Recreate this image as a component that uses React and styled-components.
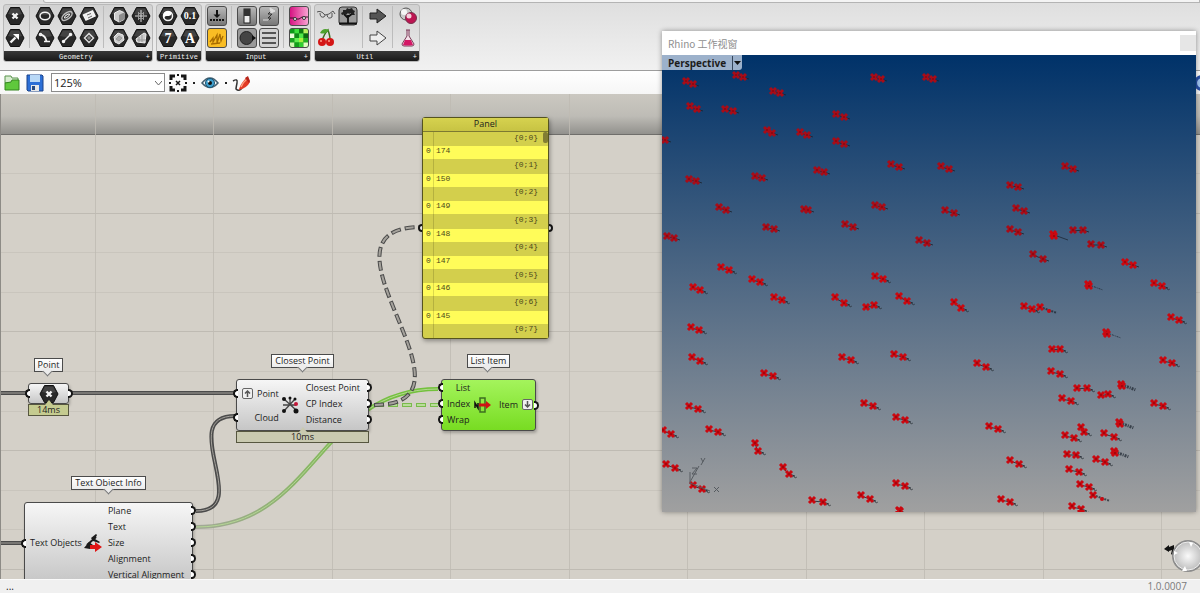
import React from "react";
import styled, { createGlobalStyle } from "styled-components";

const GlobalStyle = createGlobalStyle`
  *,
  *::before,
  *::after {
    box-sizing: border-box;
  }

  body {
    margin: 0;
    overflow: hidden;
    font-family: "Open Sans", "Noto Sans CJK SC", sans-serif;
    color: #1c1c1c;
  }

  button {
    padding: 0;
    border: 0;
    background: none;
    font: inherit;
    color: inherit;
  }

  svg {
    display: block;
  }
`

const Page = styled.div`
  position: relative;
  display: flex;
  flex-direction: column;
  height: 100vh;
  background: #efefef;
`

/* ribbon */

const Ribbon = styled.header`
  display: flex;
  flex-direction: column;
  height: 71px;
  flex-shrink: 0;
  background: linear-gradient(#dedede, #f1f1f1);
  border-bottom: 1px solid #9d9d9d;
`

const TabEdge = styled.div`
  height: 3px;
  margin-left: 43px;
  border: 1px solid #b4b4b4;
  border-top: 0;
  border-radius: 0 0 0 4px;
  background: #f4f4f4;
`

const Groups = styled.div`
  display: flex;
  gap: 3px;
  padding: 1px 3px;
`

const Group = styled.section`
  display: flex;
  flex-direction: column;
  border: 1px solid #b9b9b9;
  border-radius: 3px;
  background: linear-gradient(#d2d2d2, #ececec);
  overflow: hidden;
`

const GroupBody = styled.div`
  display: flex;
  padding: 1px;
`

const Section = styled.div`
  display: grid;
  grid-template-rows: 20px 20px;
  grid-auto-flow: column;
  grid-auto-columns: 20px;
  gap: 2px;

  & + & {
    margin-left: 4px;
    padding-left: 5px;
    border-left: 1px solid #bcbcbc;
  }
`

const GroupTitle = styled.h2`
  display: flex;
  align-items: center;
  height: 11px;
  margin: 2px -1px -1px;
  padding: 0 3px;
  background: linear-gradient(#383838, #161616);
  color: #f2f2f2;
  font: 7px/10px "Liberation Mono", monospace;

  span:first-child {
    flex: 1;
    text-align: center;
  }
`

const IconButton = styled.button`
  width: 20px;
  height: 20px;
`

const Tile = styled.button`
  width: 20px;
  height: 20px;
  border: 1px solid #4c4c4c;
  border-radius: 3px;
  background: ${props => props.$bg || "linear-gradient(#b8b8b8, #777)"};
  overflow: hidden;
`

/* toolbar */

const Toolbar = styled.nav`
  display: flex;
  align-items: center;
  flex-shrink: 0;
  height: 23px;
  padding: 0 0 0 2px;
  background: linear-gradient(#fff, #f6f6f6);
  overflow: hidden;
`

const ToolButton = styled.button`
  flex-shrink: 0;
  width: 20px;
  height: 20px;
  margin-right: ${props => props.$gap || 0}px;
`

const ZoomBox = styled.div`
  position: relative;
  width: 114px;
  height: 19px;
  margin-right: 3px;

  svg {
    position: absolute;
    top: 8px;
    right: 3px;
    pointer-events: none;
  }
`

const ZoomSelect = styled.select`
  display: block;
  appearance: none;
  width: 100%;
  height: 100%;
  padding: 0 2px;
  border: 1px solid #8b8b8b;
  border-radius: 0;
  background: #fff;
  color: #222;
  font: 11px/16px "Open Sans", sans-serif;
`

const Caret = styled.span`
  width: 2px;
  height: 2px;
  margin: 0 5px;
  background: #222;
`

const HelpButton = styled(ToolButton)`
  width: 16px;
  height: 16px;
  margin-left: auto;
  margin-right: -10px;
  border: 3px solid #2850a8;
  border-radius: 50%;
  background: #9ec4f0;
`

/* canvas */

const Canvas = styled.main`
  position: relative;
  flex: 1;
  min-height: 0;
  overflow: hidden;
  border-left: 1px solid #8d8b86;
  background: #d4d0c8;
`

const CanvasShade = styled.div`
  height: 41px;
  background: linear-gradient(#cbc8c1 0%, #bebcb6 55%, #92918d 100%);
  border-bottom: 1px solid #6f6e6b;
`

const Wires = styled.svg`
  position: absolute;
  inset: 0 auto auto -1px;
  width: calc(100% + 1px);
  height: 100%;
`

const Placed = styled.div`
  position: absolute;
  left: ${props => props.$x}px;
  top: ${props => props.$y}px;
  width: ${props => props.$w}px;
  display: flex;
  flex-direction: column;
  align-items: center;
`

const Tag = styled.div`
  position: relative;
  height: 14px;
  margin-bottom: ${props => props.$gap || 11}px;
  padding: 0 3px;
  border: 1px solid #4b4b4b;
  background: linear-gradient(#fff, #ececec);
  font-size: 9px;
  line-height: 12px;
  white-space: nowrap;

  &::after {
    content: "";
    position: absolute;
    left: calc(50% - 4px);
    bottom: -4px;
    width: 7px;
    height: 7px;
    border: solid #777;
    border-width: 0 1px 1px 0;
    background: #ececec;
    transform: rotate(45deg);
  }
`

const Body = styled.div`
  position: relative;
  display: flex;
  width: 100%;
  height: ${props => props.$h}px;
  border: 1px solid #4a4a4a;
  border-radius: 3px;
  background: ${props => props.$selected
    ? "linear-gradient(#a4f45c, #78dc22)"
    : "linear-gradient(#f6f6f6, #c6c6c6)"};
  box-shadow: 1px 2px 3px rgba(0, 0, 0, 0.25);
`

const Ports = styled.ul`
  display: flex;
  flex-direction: column;
  justify-content: ${props => props.$center ? "center" : "flex-start"};
  margin: -1px 0 0;
  padding: 0;
  list-style: none;
`

const Port = styled.li`
  position: relative;
  display: flex;
  align-items: center;
  justify-content: ${props => props.$align || "flex-start"};
  gap: 4px;
  height: ${props => props.$h || 16}px;
  padding: 0 ${props => props.$padRight || 5}px 0 5px;
  font-size: 9px;
  white-space: nowrap;

  &::after {
    content: "";
    position: absolute;
    top: calc(50% - 4px);
    ${props => props.$side}: -4px;
    width: 5px;
    height: 9px;
    border: 2px solid #151515;
    border-${props => props.$side === "left" ? "right" : "left"}: 0;
    border-radius: ${props => props.$side === "left" ? "5px 0 0 5px" : "0 5px 5px 0"};
    background: #fff;
  }
`

const NodeIcon = styled.div`
  display: flex;
  align-items: center;
  justify-content: center;
  flex: 1;
`

const Modifier = styled.span`
  display: grid;
  place-items: center;
  width: 11px;
  height: 11px;
  border: 1px solid #666;
  border-radius: 2px;
  background: #f0f0f0;
`

const Profiler = styled.div`
  position: relative;
  width: 100%;
  height: 12px;
  border: 1px solid #56563f;
  background: ${props => props.$warm ? "#c5cb90" : "#c9c9b0"};
  font-size: 9px;
  line-height: 10px;
  text-align: center;

  &::before {
    content: "";
    position: absolute;
    top: -5px;
    left: calc(50% - 4px);
    border: solid transparent;
    border-width: 0 4px 5px;
    border-bottom-color: ${props => props.$warm ? "#c5cb90" : "#c9c9b0"};
  }
`

const PanelBox = styled.div`
  display: flex;
  flex-direction: column;
  width: 100%;
  height: 222px;
  border: 1px solid #55531f;
  border-radius: 3px;
  background: #d3cf4c;
  box-shadow: 1px 2px 4px rgba(0, 0, 0, 0.35);
`

const PanelTitle = styled.h3`
  height: 14px;
  margin: 0;
  border-bottom: 1px solid #7c7931;
  background: linear-gradient(#d6d24f, #c7c343);
  font-size: 9px;
  font-weight: 500;
  line-height: 12px;
  text-align: center;
`

const PanelRows = styled.div`
  position: relative;
  display: flex;
  flex-direction: column;
  flex: 1;
  font: 8px "Liberation Mono", monospace;
  color: #4b491c;
`

const PathRow = styled.div`
  display: flex;
  flex: 14;
  align-items: center;
  justify-content: flex-end;
  margin-left: 10px;
  padding: 0 10px 4px 0;
  border-left: 1px solid #b5b13f;
  background: #d3cf4c;
`

const ValueRow = styled.div`
  display: flex;
  flex: 13;
  align-items: center;
  background: #fffc59;

  span {
    width: 10px;
    padding: 0 0 4px 3px;
  }

  b {
    align-self: stretch;
    display: flex;
    align-items: center;
    padding: 0 0 4px 2px;
    border-left: 1px solid #dcd84c;
    font-weight: normal;
  }
`

const ScrollThumb = styled.div`
  position: absolute;
  top: 0;
  right: 0;
  width: 5px;
  height: 11px;
  border-radius: 2px;
  background: #827d33;
`

const Compass = styled.svg`
  position: absolute;
  right: -6px;
  bottom: 4px;
`

/* viewport window */

const ViewportWindow = styled.section`
  position: absolute;
  top: 31px;
  left: 662px;
  right: 4px;
  height: 481px;
  display: flex;
  flex-direction: column;
  background: #fff;
  box-shadow: 0 0 5px rgba(0, 0, 0, 0.4);
`

const WindowBar = styled.div`
  display: flex;
  align-items: center;
  justify-content: space-between;
  height: 24px;
  padding: 0 0 0 6px;

  h1 {
    margin: 0;
    color: #8f8f8f;
    font: 10px "Noto Sans CJK SC", sans-serif;
  }
`

const CloseButton = styled.button`
  width: 16px;
  height: 16px;
  background: #e6e6e6;
`

const Scene = styled.div`
  position: relative;
  flex: 1;
  background: linear-gradient(#003269, #a0a0a0);
  overflow: hidden;
`

const SceneDrawing = styled.svg`
  position: absolute;
  inset: 0;
  width: 100%;
  height: 100%;
`

const ViewTab = styled.button`
  position: relative;
  display: flex;
  align-items: center;
  height: 15px;
  padding-left: 6px;
  border-radius: 0 0 3px 0;
  background: #9cb1cb;
  font-size: 10px;
  font-weight: 700;
  line-height: 14px;

  svg {
    box-sizing: content-box;
    margin-left: 6px;
    padding: 5px 1px;
    border-left: 1px solid #35465c;
  }
`

const Status = styled.footer`
  display: flex;
  align-items: center;
  justify-content: space-between;
  flex-shrink: 0;
  height: 14px;
  padding: 0 13px 0 6px;
  border-top: 1px solid #fafafa;
  background: #f0f0f0;
  font-size: 10px;
  line-height: 13px;

  span:last-child {
    color: #7b7b7b;
  }
`

const Hex = ({ children }) => (
  <svg width="20" height="20" viewBox="0 0 20 20" fill="none" stroke="#f4f4f4" strokeWidth="1.5">
    <path d="M5.5 1.5h9L19 10l-4.5 8.5h-9L1 10z" fill="#292929" stroke="#111" strokeWidth="1" strokeLinejoin="round" />
    <path d="M6 2.5h8l3 5.500q-6 2-14 0z" fill="#555" stroke="none" opacity=".6" />
    {children}
  </svg>
)

const geometry = [
  [
    ["Point", <path d="M7.500 7.500l5 5m0-5l-5 5" strokeWidth="2.400" />],
    ["Vector", <><path d="M5.500 14.500l5-5" strokeWidth="2.400" /><path d="M8 6h6v6z" fill="#fff" stroke="none" /></>],
  ],
  [
    ["Circle", <ellipse cx="10" cy="10" rx="5" ry="3.800" />],
    ["Circular Arc", <><path d="M5.500 6.500q5 1 6 7" strokeWidth="1.800" /><circle cx="5.500" cy="6.500" r="1" /><path d="M9 13.500h6" /></>],
    ["Curve", <><ellipse cx="10" cy="10" rx="6" ry="3" transform="rotate(-38 10 10)" stroke="#bbb" /><ellipse cx="10" cy="10" rx="3" ry="1" transform="rotate(-38 10 10)" strokeWidth="1" /></>],
    ["Line", <><path d="M7 13l6-6" /><circle cx="6.500" cy="13.500" r="1" fill="#fff" /><circle cx="13.500" cy="6.500" r="1" fill="#fff" /></>],
    ["Plane", <><path d="M4.500 9l9-4 2.500 5-9 4z" fill="#eee" /><path d="M8 9l4-1.500M9 12l4-2" stroke="#666" strokeWidth="1" /></>],
    ["Rectangle", <><path d="M10 5.500l4.500 4.500-4.500 4.500L5.500 10z" stroke="#ddd" /><circle cx="10" cy="10" r="1" stroke="#888" /></>],
  ],
  [
    ["Box", <><path d="M5.500 7l5-2.500 4.500 2v7l-5 2.500-4.500-2.500z" fill="#ccc" stroke="#eee" strokeWidth="1" /><path d="M10 9l5-2.500v7L10 16z" fill="#8d8d8d" stroke="none" /></>],
    ["Brep", <><path d="M5 9l4-4 5 2 1 5-5 4-4-2z" fill="#ccc" stroke="#eee" strokeWidth="1" /><path d="M7 11l3-3 3 2-3 3z" fill="#aaa" stroke="#999" strokeWidth="1" /></>],
    ["Mesh", <><path d="M10 4v12M4 10h12" stroke="#ddd" strokeWidth="1" /><path d="M7 7.500h6M7 12.500h6M7.500 6v8M12.500 6v8" stroke="#999" strokeWidth="1" /></>],
    ["Surface", <><path d="M5 11l8-6 2 1-1 9-8-1z" fill="#ccc" stroke="#eee" strokeWidth="1" /><path d="M8 9v5M11 7v7M6 12h9" stroke="#999" strokeWidth="1" /></>],
  ],
]

const GlyphText = styled.text`
  font: bold ${props => props.$size}px "Liberation Serif", serif;
  fill: #fff;
  stroke: none;
  text-anchor: middle;
`

const primitive = [
  [
    ["Boolean", <><circle cx="10" cy="10" r="4.500" /><path d="M13.500 6.500a4.500 4.500 0 0 0-7 7q-1-4 3-3.500t4-3.500z" fill="#fff" stroke="none" /></>],
    ["Integer", <GlyphText x="10" y="15" $size={14}>7</GlyphText>],
    ["Number", <GlyphText x="10" y="13" $size={10}>0.1</GlyphText>],
    ["Text", <GlyphText x="10" y="15" $size={14}>A</GlyphText>],
  ],
]

const swatches = ["#0a9a18", "#3ce03c", "#0c7a10", "#b8f060", "#e8ffd8", "#108a18", "#50e848", "#0a6a10",
  "#18a020", "#60f050", "#a8f040", "#20b020", "#d0f8b0", "#10a018", "#30d030", "#e0ffc0"]

const inputs = [
  [
    ["Button", null, <><path d="M9 3v6" stroke="#111" strokeWidth="2" /><path d="M5.500 7.500h7L9 11z" fill="#111" /><path d="M2 13h14" stroke="#111" strokeWidth="2" strokeDasharray="2 1" /></>],
    ["Graph", "#f9bd24", <path d="M2 13l3-4v4l4-7v8l3-9 1 7 2-5M3 15l9-1" fill="none" stroke="#a86c00" strokeWidth="1.300" />],
  ],
  [
    ["Toggle", null, <><rect x="6" y="2" width="6" height="14" fill="#eee" stroke="#222" /><path d="M6 2h6v7H6z" fill="#333" /></>],
    ["Knob", "#999", <><circle cx="8.500" cy="9" r="6.500" fill="#444" stroke="#222" /><path d="M14 6l4 3-4 3z" fill="#111" /></>],
    ["Slider", null, <><path d="M11 4L8 7h4l-4 4h3l-3 3" fill="none" stroke="#333" /><path d="M10 1l5 3-4 2zM3 13h6" stroke="#ddd" fill="#ddd" /></>],
    ["Value List", "#d2d2d2", <path d="M2 4h14M2 9h14M2 14h14" stroke="#555" strokeWidth="2" />],
  ],
  [
    ["Gradient", "linear-gradient(90deg, #d61382, #f9a2d2)", <><path d="M0 11h4l2 1 3 0 3-2h6" stroke="#40102c" fill="none" /><circle cx="5" cy="12" r="1.500" fill="#fff" stroke="#333" /><circle cx="14" cy="11" r="1.500" fill="#fff" stroke="#333" /></>],
    ["Image Sampler", "#209420", swatches.map((fill, i) => <rect key={i} x={(i % 4) * 4.500} y={Math.floor(i / 4) * 4.500} width="4.500" height="4.500" fill={fill} />)],
  ],
]

const arrow = "M2 7h7V3l9 7-9 7v-4H2z"

const utils = [
  [
    ["Glasses", <path d="M1 6q4-2 8 3l4-1 4-3M4 7q0 5 4 4 2-2 0-3M11 9q1 5 5 2l0-4M17 5l2 3" fill="none" stroke="#555" />],
    ["Cherries", <><path d="M6 13Q8 6 12 2q2 6 2 9" fill="none" stroke="#3d6f22" strokeWidth="1.500" /><path d="M4 5q3-6 9-3-3 5-9 3z" fill="#4da22d" /><circle cx="6" cy="14" r="4" fill="#d41616" /><circle cx="14" cy="14" r="4" fill="#d41616" /><circle cx="5" cy="13" r="1" fill="#ff9b8a" /><circle cx="13" cy="13" r="1" fill="#ff9b8a" /></>],
    ["Tree", <><rect x="1" y="1" width="18" height="18" rx="3" fill="#9b9b9b" stroke="#333" /><path d="M10 17V9M10 12L6 8M10 11l5-4" stroke="#111" strokeWidth="1.800" fill="none" /><path d="M4 9l-1-2 2-1 0-2 3 0 1-2 2 1 3-1 1 2 2 1-1 2 1 2-3 0-1-2-2 1-1-1-2 2-1-1z" fill="#222" /><path d="M1 17.500h18" stroke="#111" strokeWidth="2" /></>],
    null,
  ],
  [
    ["Data Output", <path d={arrow} fill="#555" stroke="#222" />],
    ["Data Input", <path d={arrow} fill="#eee" stroke="#444" />],
  ],
  [
    ["Mix", <><circle cx="8" cy="8" r="6" fill="#c9c9c9" stroke="#555" /><circle cx="6" cy="6" r="3" fill="#f5f5f5" /><circle cx="13" cy="12" r="5.500" fill="#bd1552" stroke="#77304b" /><circle cx="11" cy="10" r="2.500" fill="#f3d1dd" /></>],
    ["Flask", <><path d="M8 2h4M9 2v6l-5 8q0 2 2 2h8q2 0 2-2l-5-8V2" fill="#f4dfe8" stroke="#7a3b58" /><path d="M7 12h6l2 5q-5 1-10 0z" fill="#d41766" /></>],
  ],
]

const HexGroup = ({ title, sections, plus }) => (
  <Group>
    <GroupBody>
      {sections.map((items, i) => (
        <Section key={i}>
          {items.map(([name, glyph]) => (
            <IconButton key={name} aria-label={name}><Hex>{glyph}</Hex></IconButton>
          ))}
        </Section>
      ))}
    </GroupBody>
    <GroupTitle><span>{title}</span>{plus && <span>+</span>}</GroupTitle>
  </Group>
)

// pairs of points: x1, y1, x2, y2
const pairs = [
  [24, 26, 31, 29], [74, 20, 81, 22], [111, 36, 118, 38], [212, 22, 219, 24], [28, 51, 35, 54],
  [63, 54, 71, 56], [174, 59, 182, 62], [105, 75, 110, 78], [138, 77, 145, 80], [174, 86, 182, 89],
  [-4, 83, 3, 85], [229, 109, 237, 112], [155, 115, 162, 117], [27, 124, 34, 126], [93, 121, 100, 123],
  [57, 152, 64, 155], [142, 154, 146, 155], [213, 150, 220, 152], [104, 172, 112, 174], [183, 169, 191, 172],
  [5, 181, 12, 183], [257, 185, 265, 188], [264, 22, 271, 24], [279, 111, 287, 114], [403, 111, 411, 114],
  [348, 130, 356, 132], [283, 155, 292, 158], [354, 153, 362, 156], [348, 174, 356, 177], [411, 175, 421, 175],
  [429, 189, 439, 190], [371, 199, 381, 204], [463, 207, 471, 210], [59, 212, 67, 215], [90, 224, 98, 227],
  [31, 232, 38, 235], [112, 242, 120, 245], [173, 242, 182, 248], [213, 221, 221, 224], [204, 252, 212, 250],
  [237, 241, 245, 246], [29, 272, 37, 275], [30, 302, 38, 306], [102, 318, 111, 321], [180, 302, 189, 305],
  [232, 299, 241, 302], [27, 351, 36, 354], [47, 374, 56, 377], [1, 375, 9, 379], [93, 388, 96, 396],
  [202, 348, 211, 351], [234, 362, 243, 365], [4, 409, 13, 413], [31, 430, 40, 434], [121, 412, 127, 419],
  [150, 445, 161, 447], [199, 440, 208, 444], [234, 428, 243, 431], [237, 455, 238, 456], [492, 228, 500, 231],
  [292, 247, 299, 253], [362, 251, 370, 254], [509, 262, 517, 265], [390, 294, 398, 294], [315, 308, 324, 312],
  [501, 305, 510, 308], [389, 316, 398, 319], [415, 333, 425, 333], [439, 340, 446, 339], [400, 343, 409, 346],
  [492, 348, 501, 351], [327, 371, 336, 374], [419, 372, 422, 377], [403, 380, 412, 383], [442, 378, 452, 382],
  [405, 399, 414, 400], [434, 404, 443, 407], [348, 405, 357, 409], [407, 414, 417, 417], [418, 429, 427, 432],
  [339, 444, 348, 447], [410, 451, 419, 454],
]

// overlapping points with a longer label
const clusters = [[391, 180], [426, 230], [444, 278], [459, 330], [457, 368], [452, 397]]

const singles = [[378, 252], [431, 440]]

const Cross = ({ x, y, far }) => (
  <g transform={`translate(${x} ${y})`}>
    <path d="M-3-3L3 3M3-3L-3 3" stroke={far ? "#a80c18" : "#cb0810"} strokeWidth="3" />
    <path d="M-1 0h2" stroke="#7a0408" strokeWidth="1" />
  </g>
)

const PointCloud = () => (
  <SceneDrawing aria-hidden="true">
    {pairs.map(([x1, y1, x2, y2]) => (
      <g key={`${x1}-${y1}`}>
        <path d={`M${x1} ${y1 + 1}L${x2} ${y2}l6 2`} stroke="#1a222c" strokeWidth="1" fill="none" opacity=".8" />
        {y1 > 210 && <path d={`M${x2 + 3} ${y2 + 3}l2-1 1 2 2-1`} stroke="#252b31" strokeWidth="1" fill="none" opacity=".6" />}
        <Cross x={x1} y={y1} far={y1 < 200} />
        <Cross x={x2} y={y2} far={y1 < 200} />
      </g>
    ))}
    {clusters.map(([x, y]) => (
      <g key={`${x}-${y}`}>
        <path d={`M${x + 4} ${y + 1}l11 4`} stroke="#1a222c" strokeWidth={y > 300 ? 3 : 1} strokeDasharray={y > 200 ? "1 1 2 1" : undefined} opacity=".7" />
        <Cross x={x} y={y - 1} />
        <Cross x={x + 1} y={y + 1} />
      </g>
    ))}
    {singles.map(([x, y]) => (
      <g key={`${x}-${y}`}>
        <path d={`M${x} ${y}l17 6`} stroke="#1a222c" strokeWidth="2" strokeDasharray="2 1" opacity=".7" />
        <Cross x={x} y={y} />
        <circle cx={x + 9} cy={y + 4} r="2" fill="#cb0810" />
      </g>
    ))}
    <g stroke="#565b60" strokeWidth="1" fill="none">
      <path d="M28 429v-12M28 427l9-16M28 428l20 8" />
      <path d="M30 413h5l-5 6h5M39 403l2 4M43 403l-4 7M52 432l5 5M57 432l-5 5" />
    </g>
  </SceneDrawing>
)

const gridX = [95, 213, 332, 450, 569, 687, 806, 924, 1043, 1161]
const gridY = [79, 119, 158, 198, 237, 277, 317, 356, 396, 435, 475]

const wirePaths = [
  "M0 299H28",
  "M71 299H236",
  "M0 449H22",
  "M196 417C255 417 175 322 235 322",
]

const Wire = ({ d, edge = "#4b4b4b", core = "#a5a29c", dash }) => (
  <g fill="none">
    <path d={d} stroke={edge} strokeWidth="4" strokeDasharray={dash && "10 4"} />
    <path d={d} stroke={core} strokeWidth={dash ? 2 : 1} strokeDasharray={dash && "8 6"} strokeDashoffset={dash && -1} />
  </g>
)

const Arrow = ({ up }) => (
  <Modifier>
    <svg width="7" height="7" viewBox="0 0 7 7">
      <path d={up ? "M3.500 7V1M1 3.500L3.500 1 6 3.500" : "M3.500 0v6M1 3.500L3.500 6 6 3.500"} fill="none" stroke="#555" strokeWidth="1.500" />
    </svg>
  </Modifier>
)

const values = [174, 150, 149, 148, 147, 146, 145]

const DataPanel = () => (
  <PanelBox>
    <PanelTitle>Panel</PanelTitle>
    <PanelRows>
      {values.map((value, i) => (
        <React.Fragment key={value}>
          <PathRow>{`{0;${i}}`}</PathRow>
          <ValueRow><span>0</span><b>{value}</b></ValueRow>
        </React.Fragment>
      ))}
      <PathRow>{"{0;7}"}</PathRow>
      <ScrollThumb />
    </PanelRows>
  </PanelBox>
)

const App = () => {
  return (
    <Page>
      <GlobalStyle />
      <Ribbon>
        <TabEdge />
        <Groups>
          <HexGroup title="Geometry" sections={geometry} plus />
          <HexGroup title="Primitive" sections={primitive} />
          <Group>
            <GroupBody>
              {inputs.map((items, i) => (
                <Section key={i}>
                  {items.map(([name, bg, glyph]) => (
                    <Tile key={name} aria-label={name} $bg={bg}>
                      <svg width="18" height="18" viewBox="0 0 18 18">{glyph}</svg>
                    </Tile>
                  ))}
                </Section>
              ))}
            </GroupBody>
            <GroupTitle><span>Input</span><span>+</span></GroupTitle>
          </Group>
          <Group>
            <GroupBody>
              {utils.map((items, i) => (
                <Section key={i}>
                  {items.filter(Boolean).map(([name, glyph]) => (
                    <IconButton key={name} aria-label={name}>
                      <svg width="20" height="20" viewBox="0 0 20 20">{glyph}</svg>
                    </IconButton>
                  ))}
                </Section>
              ))}
            </GroupBody>
            <GroupTitle><span>Util</span><span>+</span></GroupTitle>
          </Group>
        </Groups>
      </Ribbon>

      <Toolbar>
        <ToolButton aria-label="Open" $gap={3}>
          <svg width="20" height="20" viewBox="0 0 20 20">
            <path d="M3 3h6l1 2h6v5H3z" fill="#d8ecd0" stroke="#58934c" />
            <path d="M3 10l6-1 1-2h7v10H3z" fill="#5fc83c" stroke="#34851f" />
          </svg>
        </ToolButton>
        <ToolButton aria-label="Save" $gap={6}>
          <svg width="20" height="20" viewBox="0 0 20 20">
            <path d="M2 2h15l1 1v15H3l-1-1z" fill="#2c6fd6" stroke="#1b4388" />
            <path d="M5 2h10v7H5z" fill="#b9d8f6" />
            <path d="M6 12h8v6H6z" fill="#e8e8e8" />
            <path d="M7 13h3v4H7z" fill="#274a80" />
          </svg>
        </ToolButton>
        <ZoomBox>
          <ZoomSelect aria-label="Zoom" defaultValue="125%">
            <option>125%</option>
          </ZoomSelect>
          <svg width="7" height="5" viewBox="0 0 7 5">
            <path d="M0 0l3.500 4L7 0" fill="none" stroke="#666" />
          </svg>
        </ZoomBox>
        <ToolButton aria-label="Zoom extents">
          <svg width="20" height="20" viewBox="0 0 20 20" fill="none" stroke="#161616" strokeWidth="3">
            <path d="M3 7V3h4M13 3h4v4M17 13v4h-4M7 17H3v-4" />
            <path d="M8 8l4 4m0-4l-4 4" strokeWidth="1.500" />
            <path d="M9 2h2M9 18h2M2 9v2M18 9v2" strokeWidth="2" />
          </svg>
        </ToolButton>
        <Caret />
        <ToolButton aria-label="Preview">
          <svg width="20" height="20" viewBox="0 0 20 20">
            <path d="M2 10q8-10 16 0-8 9-16 0z" fill="#f4f8fa" stroke="#445e6e" strokeWidth="1.500" />
            <circle cx="10" cy="10" r="4.500" fill="#3fa0cf" stroke="#17516f" />
            <circle cx="10" cy="10" r="2" fill="#111" />
            <circle cx="8.500" cy="8.500" r="1" fill="#fff" />
          </svg>
        </ToolButton>
        <Caret />
        <ToolButton aria-label="Sketch">
          <svg width="20" height="20" viewBox="0 0 20 20">
            <path d="M1 8q5-3 4 2t-1 6q3 3 6-1" fill="none" stroke="#333" strokeWidth="1.500" />
            <path d="M7 16q2-6 8-12l3 5q-3 6-11 8z" fill="#e23b25" />
            <path d="M9 14q2-5 6-8" stroke="#ffa080" strokeWidth="1.500" fill="none" />
            <path d="M13 5l3-2 2 5-1 2z" fill="#b5241a" />
          </svg>
        </ToolButton>
        <HelpButton aria-label="Help" />
      </Toolbar>

      <Canvas>
        <CanvasShade />
        <Wires aria-hidden="true">
          <defs>
            <linearGradient id="textWire" gradientUnits="userSpaceOnUse" x1="196" y1="0" x2="400" y2="0">
              <stop offset="0" stopColor="#a3a898" />
              <stop offset="1" stopColor="#73c13c" />
            </linearGradient>
          </defs>
          <g stroke="#bfbbb3" strokeWidth="1">
            {gridX.map(x => <path key={x} d={`M${x}.500 0V500`} opacity=".8" />)}
            {gridY.map((y, i) => <path key={y} d={`M0 ${y}.500H1200`} opacity={i % 3 === 1 ? 1 : 0.5} />)}
          </g>
          <Wire d="M196 433C316 433 318 295 438 295" edge="url(#textWire)" core="#b5d795" />
          <Wire d="M374 311H438" edge="#79bb4b" core="#b9dc9a" dash />
          {wirePaths.map(d => <Wire key={d} d={d} />)}
          <Wire d="M374 311C494 311 299 133 422 133" dash />
          <g fill="#fff" stroke="#151515" strokeWidth="2">
            <circle cx="422" cy="134" r="3" />
            <circle cx="549" cy="134" r="3" />
          </g>
        </Wires>

        <Placed $x={421} $y={23} $w={127}>
          <DataPanel />
        </Placed>

        <Placed $x={27} $y={264} $w={41}>
          <Tag>Point</Tag>
          <Body $h={21}>
            <Ports $center><Port $side="left" /></Ports>
            <NodeIcon><Hex>{geometry[0][0][1]}</Hex></NodeIcon>
            <Ports $center><Port $side="right" /></Ports>
          </Body>
          <Profiler $warm>14ms</Profiler>
        </Placed>

        <Placed $x={235} $y={260} $w={133}>
          <Tag>Closest Point</Tag>
          <Body $h={52}>
            <Ports>
              <Port $side="left" $h={28} $padRight={1}><Arrow up />Point</Port>
              <Port $side="left" $h={20} $padRight={1} $align="flex-end">Cloud</Port>
            </Ports>
            <NodeIcon>
              <svg width="18" height="18" viewBox="0 0 18 18">
                <path d="M3 3l12 11M14 3L3 15M9 2v6M2 9h13" stroke="#444" strokeWidth="1.300" />
                <g fill="#111">
                  <circle cx="3" cy="3" r="2" />
                  <circle cx="9" cy="2" r="1.500" />
                  <circle cx="3" cy="15" r="2" />
                  <circle cx="15" cy="15" r="2.500" />
                  <circle cx="14" cy="3" r="1.500" />
                </g>
                <circle cx="15" cy="8" r="2" fill="#c41738" />
              </svg>
            </NodeIcon>
            <Ports>
              <Port $side="right" $padRight={8}>Closest Point</Port>
              <Port $side="right">CP Index</Port>
              <Port $side="right">Distance</Port>
            </Ports>
          </Body>
          <Profiler>10ms</Profiler>
        </Placed>

        <Placed $x={440} $y={260} $w={95}>
          <Tag>List Item</Tag>
          <Body $h={52} $selected>
            <Ports>
              <Port $side="left" $padRight={1} $align="flex-end">List</Port>
              <Port $side="left" $padRight={1}>Index</Port>
              <Port $side="left" $padRight={1}>Wrap</Port>
            </Ports>
            <NodeIcon>
              <svg width="18" height="18" viewBox="0 0 18 18">
                <path d="M1 12V7l3 5V7" fill="none" stroke="#111" strokeWidth="1.500" />
                <path d="M6 2h5v14H6z" fill="none" stroke="#3d6d20" strokeWidth="1.500" />
                <path d="M5 9h8" stroke="#d01414" strokeWidth="3" />
                <path d="M12 5l5 4-5 4z" fill="#d01414" />
              </svg>
            </NodeIcon>
            <Ports $center>
              <Port $side="right" $padRight={2}>Item<Arrow /></Port>
            </Ports>
          </Body>
        </Placed>

        <Placed $x={23} $y={382} $w={169}>
          <Tag $gap={12}>Text Object Info</Tag>
          <Body $h={82}>
            <Ports $center>
              <Port $side="left" $padRight={1}>Text Objects</Port>
            </Ports>
            <NodeIcon>
              <svg width="20" height="20" viewBox="0 0 20 20">
                <path d="M1 15l5-6 4 3-3 4zM8 5l5-4 1 1-2 4 5 3-1 1-6-2z" fill="#1b1b1b" />
                <path d="M4 12l9-8" stroke="#1b1b1b" strokeWidth="2" />
                <path d="M7 12h5V9l7 5-7 5v-3H7z" fill="#e01515" />
              </svg>
            </NodeIcon>
            <Ports>
              <Port $side="right">Plane</Port>
              <Port $side="right">Text</Port>
              <Port $side="right">Size</Port>
              <Port $side="right">Alignment</Port>
              <Port $side="right" $padRight={8}>Vertical Alignment</Port>
            </Ports>
          </Body>
        </Placed>

        <Compass width="42" height="38" viewBox="0 0 42 38" aria-hidden="true">
          <defs>
            <radialGradient id="ball">
              <stop offset="0" stopColor="#fafafa" />
              <stop offset="1" stopColor="#bcbcbc" />
            </radialGradient>
          </defs>
          <path d="M0 12l5-4v2l5-2v11l-3-2 1-4-3 1v1z" fill="#111" />
          <circle cx="24" cy="19" r="15" fill="url(#ball)" stroke="#8c8c8c" strokeWidth="2" />
          <circle cx="24" cy="19" r="14" fill="none" stroke="#eee" />
          <path d="M25 5l4 1-2 4zM10 14l4 2-4 2zM18 34l3-5 2 5z" fill="#fff" />
        </Compass>
      </Canvas>

      <Status>
        <span>...</span>
        <span>1.0.0007</span>
      </Status>

      <ViewportWindow>
        <WindowBar>
          <h1>Rhino 工作视窗</h1>
          <CloseButton aria-label="Close" />
        </WindowBar>
        <Scene>
          <PointCloud />
          <ViewTab>
            Perspective
            <svg width="7" height="4" viewBox="0 0 7 4"><path d="M0 0h7L3.500 4z" fill="#111" /></svg>
          </ViewTab>
        </Scene>
      </ViewportWindow>
    </Page>
  )
}

export default App;
